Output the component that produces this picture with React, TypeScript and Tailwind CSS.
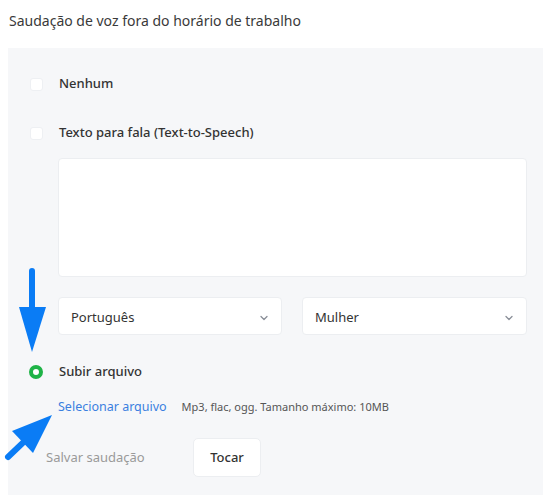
import React, { useState } from 'react';

type Mode = 'none' | 'tts' | 'upload';

const Radio: React.FC<{ checked: boolean }> = ({ checked }) =>
  checked ? (
    <span className="w-[14px] h-[14px] rounded-full border-[4px] border-[#1fb347] bg-white shrink-0" />
  ) : (
    <span className="w-[13px] h-[13px] rounded-[3px] border border-[#eef0f3] bg-white shrink-0" />
  );

const Chevron = () => (
  <svg width="10" height="10" viewBox="0 0 10 10" className="text-[#8a8f98]">
    <path d="M2 3.5 L5 6.5 L8 3.5" fill="none" stroke="currentColor" strokeWidth="1.3" strokeLinecap="round" strokeLinejoin="round" />
  </svg>
);

const SelectBox: React.FC<{ value: string; className: string }> = ({ value, className }) => (
  <div className={`h-[38px] bg-white rounded-[4px] border border-[#eceef1] flex items-center justify-between pl-[12px] pr-[12px] pt-[3px] text-[13px] text-[#333] ${className}`}>
    <span>{value}</span>
    <Chevron />
  </div>
);

export default function App() {
  const [mode, setMode] = useState<Mode>('upload');

  return (
    <div className="relative w-[551px] h-[501px] bg-white font-['Noto_Sans',sans-serif] text-[#333]">
      <div className="pl-[9px] pt-[9px] h-[48px] text-[14px] leading-[24px] text-[#3a3a3a]">
        Saudação de voz fora do horário de trabalho
      </div>

      <div className="ml-[8px] w-[535px] h-[447px] bg-[#f6f7f9] pl-[22px] pt-[26px]">
        <button className="flex items-center h-[20px] gap-[16px]" onClick={() => setMode('none')}>
          <Radio checked={mode === 'none'} />
          <span className="text-[13px] font-medium">Nenhum</span>
        </button>

        <button className="mt-[29px] flex items-center h-[20px] gap-[16px]" onClick={() => setMode('tts')}>
          <Radio checked={mode === 'tts'} />
          <span className="text-[13px] font-medium">Texto para fala (Text-to-Speech)</span>
        </button>

        <div className="ml-[28px] mt-[15px] w-[469px]">
          <textarea className="block w-full h-[119px] bg-white rounded-[4px] border border-[#eceef1] resize-none outline-none" />
          <div className="mt-[20px] flex gap-[20px]">
            <SelectBox value="Português" className="w-[224px]" />
            <SelectBox value="Mulher" className="w-[225px]" />
          </div>
        </div>

        <button className="mt-[27px] flex items-center h-[20px] gap-[16px] -ml-[1px]" onClick={() => setMode('upload')}>
          <Radio checked={mode === 'upload'} />
          <span className="text-[13px] font-medium">Subir arquivo</span>
        </button>

        <div className="ml-[28px] mt-[15px] flex items-center h-[20px]">
          <span className="text-[12.5px] text-[#3b7fe0]">Selecionar arquivo</span>
          <span className="ml-[15px] text-[11px] text-[#555]">Mp3, flac, ogg. Tamanho máximo: 10MB</span>
        </div>

        <div className="mt-[21px] flex items-center">
          <span className="ml-[16px] w-[147px] text-[13px] text-[#9a9a9a]">Salvar saudação</span>
          <button className="w-[68px] h-[39px] bg-white rounded-[5px] text-[13px] font-medium text-[#333] border border-[#eceef1]">
            Tocar
          </button>
        </div>
      </div>

      <svg className="absolute left-0 top-0 pointer-events-none" width="551" height="501">
        <line x1="32" y1="271" x2="32" y2="315" stroke="#0a7cf5" strokeWidth="6" strokeLinecap="round" />
        <polygon points="19,307 46,307 32,352" fill="#0a7cf5" />
        <line x1="8" y1="457" x2="30" y2="436" stroke="#0a7cf5" strokeWidth="6" strokeLinecap="round" />
        <polygon points="52,415 12,431 33,453" fill="#0a7cf5" />
      </svg>
    </div>
  );
}
